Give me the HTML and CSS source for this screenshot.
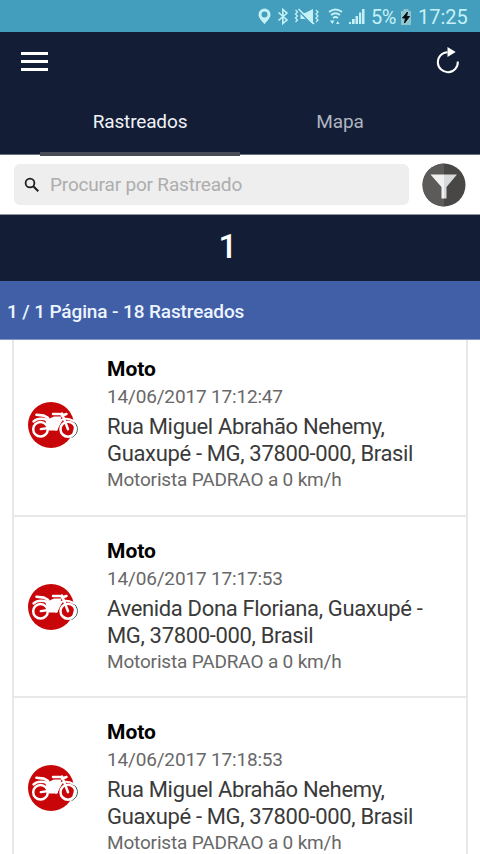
FILE: index.html
```html
<!DOCTYPE html>
<html lang="pt-BR">
<head>
<meta charset="utf-8">
<title>Rastreados</title>
<link rel="stylesheet" href="styles.css">
</head>
<body>
<svg class="defs" width="0" height="0">
  <symbol id="bike" viewBox="0 0 54 50">
    <circle cx="25" cy="25" r="23" fill="#c80508"/>
    <path d="M48.500 22.500a9 9 0 0 1-3 15" fill="none" stroke="#24483d" stroke-width="1"/>
    <g fill="none" stroke="#fff" stroke-linecap="round" stroke-linejoin="round">
      <circle cx="14.500" cy="29.200" r="7.300" stroke-width="2.500"/>
      <circle cx="42" cy="29.200" r="7.500" stroke-width="2.500"/>
      <path d="M10.500 14.800l7.500.8 4 2.200" stroke-width="2.600"/>
      <path d="M7.500 21.500q5-4.500 14-1.500" stroke-width="2.400"/>
      <path d="M27 14h7M36 15.500l4.500-1.500M36 13.500l6 15.700" stroke-width="2.500"/>
      <path d="M33 22.500q5-6.500 14.500-1.500" stroke-width="2"/>
      <path d="M14.700 29.200l8-1.200M30 29.500l5-9" stroke-width="2.300"/>
    </g>
    <path d="M19 19l5-.8 4-1.700h7.500l-1.500 5.500-2.500 8.500H22.500L21 26z" fill="#fff"/>
  </symbol>
</svg>
<div class="status">
  <svg class="status-icons" width="121" height="32" viewBox="0 0 121 32" fill="#c4f1f6">
    <path fill-rule="evenodd" d="M14.500 8.500a6 6 0 0 0-6 6c0 3.800 4 7 6 9.800 2-2.800 6-6 6-9.800a6 6 0 0 0-6-6zm0 3a3 3 0 1 1 0 6 3 3 0 0 1 0-6z"/>
    <path d="M28.500 12.500l8.500 7.500-4.200 3.500V9.500L37 13l-8.500 7.500" fill="none" stroke="#c4f1f6" stroke-width="1.600"/>
    <path d="M50.500 13h4.500l8-4v15l-8-5h-4.500z"/>
    <path d="M49 11l13 14" stroke="#439dbc" stroke-width="1.500"/>
    <path d="M48.500 9l15.500 15" stroke="#c4f1f6" stroke-width="1.600"/>
    <path d="M45.500 10l2 2-2 2 2 2-2 2 2 2-2 2M66 10l2 2-2 2 2 2-2 2 2 2-2 2" fill="none" stroke="#c4f1f6" stroke-width="1.300"/>
    <path d="M79 12q6.500-5 13 0M81 15q4.500-3.500 9 0M83 18q2.500-2 5 0" fill="none" stroke="#c4f1f6" stroke-width="1.800"/>
    <path d="M80 20.500h4.500l-2.200 3.500zM86 24h3.500l-1.700-3z"/>
    <path d="M99 22h2v2h-2zM102 19h2.700v5H102zM105.500 16h2.500v8h-2.500zM109 12.500h2.200V24H109zM112 9h2.500v15H112z"/>
  </svg>
  <span class="battery-text">5%</span>
  <svg class="battery" width="12" height="18" viewBox="0 0 12 18"><path d="M3.500 1h5v2H11v14H1V3h2.500z" fill="#8fc7d0"/><path d="M7.500 4L2.500 10h3l-1 5 5-6.500h-3z" fill="#090c12" stroke="#090c12"/></svg>
  <span class="clock">17:25</span>
</div>
<header class="header">
  <div class="toolbar">
    <div class="menu"><i></i><i></i><i></i></div>
    <svg class="refresh" width="26" height="30" viewBox="0 0 26 30"><path d="M13.500 7.200A10 10 0 1 0 23.800 16.500" fill="none" stroke="#fff" stroke-width="2"/><path d="M13.500 2l8.200 5-8.200 5z" fill="#fff"/></svg>
  </div>
  <nav class="tabs"><span class="tab active">Rastreados</span><span class="tab">Mapa</span></nav>
</header>
<div class="search">
  <div class="field">
    <svg width="16" height="16" viewBox="0 0 16 16" fill="none" stroke="#222"><circle cx="6" cy="6" r="4.400" stroke-width="1.800"/><path d="M9.300 9.300l5 5" stroke-width="2"/></svg>
    <span>Procurar por Rastreado</span>
  </div>
  <svg width="44" height="44" viewBox="0 0 44 44"><circle cx="22" cy="22" r="21.500" fill="#494646"/><path d="M22 .5a21.500 21.500 0 0 0 0 43z" fill="#5d5a5a"/><path d="M8.500 11.500H22v24h-2.500V24z" fill="#f1f1f1"/><path d="M22 11.500h13L24.500 24v11.500H22z" fill="#d7dada"/></svg>
</div>
<div class="count">1</div>
<div class="summary">1 / 1 Página - 18 Rastreados</div>
<main class="list">
  <article class="row">
    <svg class="bike" width="54" height="50"><use href="#bike"/></svg>
    <div class="info"><h2>Moto</h2><p class="date">14/06/2017 17:12:47</p><p class="address">Rua Miguel Abrahão Nehemy,<br>Guaxupé - MG, 37800-000, Brasil</p><p class="driver">Motorista PADRAO a 0 km/h</p></div>
  </article>
  <article class="row">
    <svg class="bike" width="54" height="50"><use href="#bike"/></svg>
    <div class="info"><h2>Moto</h2><p class="date">14/06/2017 17:17:53</p><p class="address">Avenida Dona Floriana, Guaxupé -<br>MG, 37800-000, Brasil</p><p class="driver">Motorista PADRAO a 0 km/h</p></div>
  </article>
  <article class="row">
    <svg class="bike" width="54" height="50"><use href="#bike"/></svg>
    <div class="info"><h2>Moto</h2><p class="date">14/06/2017 17:18:53</p><p class="address">Rua Miguel Abrahão Nehemy,<br>Guaxupé - MG, 37800-000, Brasil</p><p class="driver">Motorista PADRAO a 0 km/h</p></div>
  </article>
</main>
</body>
</html>
```
FILE: styles.css
```css
* { box-sizing: border-box; }
body {
  margin: 0;
  height: 854px;
  overflow: hidden;
  display: flex;
  flex-direction: column;
  background: #fff;
  font-family: Roboto, sans-serif;
}
body > * { flex-shrink: 0; }
.defs { position: absolute; }
svg { display: block; flex: none; }
.status {
  height: 32px;
  background: #439dbc;
  color: #c4f1f6;
  display: flex;
  align-items: center;
  padding-left: 250px;
  font-size: 20px;
  line-height: 32px;
}
.battery-text { width: 29px; padding-top: 2px; letter-spacing: -0.6px; }
.battery { margin-top: 2px; }
.clock { margin-left: 6px; padding-top: 2px; }
.header { height: 123px; background: #131e36; border-bottom: 1px solid #667081; }
.toolbar {
  height: 58px;
  display: flex;
  justify-content: space-between;
  padding: 14px 20px 0 21px;
}
.refresh { margin-top: -1px; }
.menu { display: flex; flex-direction: column; gap: 5px; padding-top: 6px; }
.menu i { width: 27px; height: 3px; background: #fff; }
.tabs { display: flex; justify-content: center; height: 66px; }
.tab {
  width: 200px;
  height: 66px;
  padding-top: 20px;
  text-align: center;
  font-size: 19px;
  line-height: 24px;
  letter-spacing: -0.15px;
  color: #aeb3c1;
}
.tab.active { color: #f1f3f8; border-bottom: 4px solid #484d57; }
.search {
  height: 60px;
  display: flex;
  align-items: center;
  justify-content: space-between;
  padding: 0 14px;
  border-bottom: 1px solid #9296a2;
}
.field {
  width: 395px;
  height: 41px;
  border-radius: 6px;
  background: #eee;
  display: flex;
  align-items: center;
  gap: 10px;
  padding-left: 10px;
  color: #adadad;
  font-size: 19px;
  letter-spacing: -0.18px;
}
.count {
  height: 66px;
  background: #131e36;
  color: #fff;
  font-size: 33px;
  font-weight: 500;
  line-height: 63px;
  text-align: center;
  padding-right: 24px;
}
.summary {
  height: 59px;
  background: #415fa7;
  border-bottom: 1px solid #8497c9;
  color: #edf5ff;
  font-size: 19px;
  font-weight: 500;
  line-height: 61px;
  letter-spacing: -0.12px;
  padding-left: 7px;
}
.list { margin: 0 12px; border: solid #e8e8e8; border-width: 0 2px; }
.row {
  height: 181.500px;
  display: flex;
  gap: 27px;
  padding: 20px 0 0 12px;
  border-bottom: 2px solid #e8e8e8;
}
.row:first-child { height: 176.500px; padding-top: 15px; }
.bike { margin-top: 45px; }
.info { white-space: nowrap; }
h2, p { margin: 0; }
h2 { font-size: 21px; font-weight: 700; line-height: 28px; color: #000; }
.date, .driver { font-size: 19px; line-height: 27px; letter-spacing: -0.17px; color: #686868; }
.address { font-size: 22px; line-height: 27px; padding-top: 3px; letter-spacing: -0.34px; color: #3a3a3a; }
.driver { line-height: 25px; }
```
